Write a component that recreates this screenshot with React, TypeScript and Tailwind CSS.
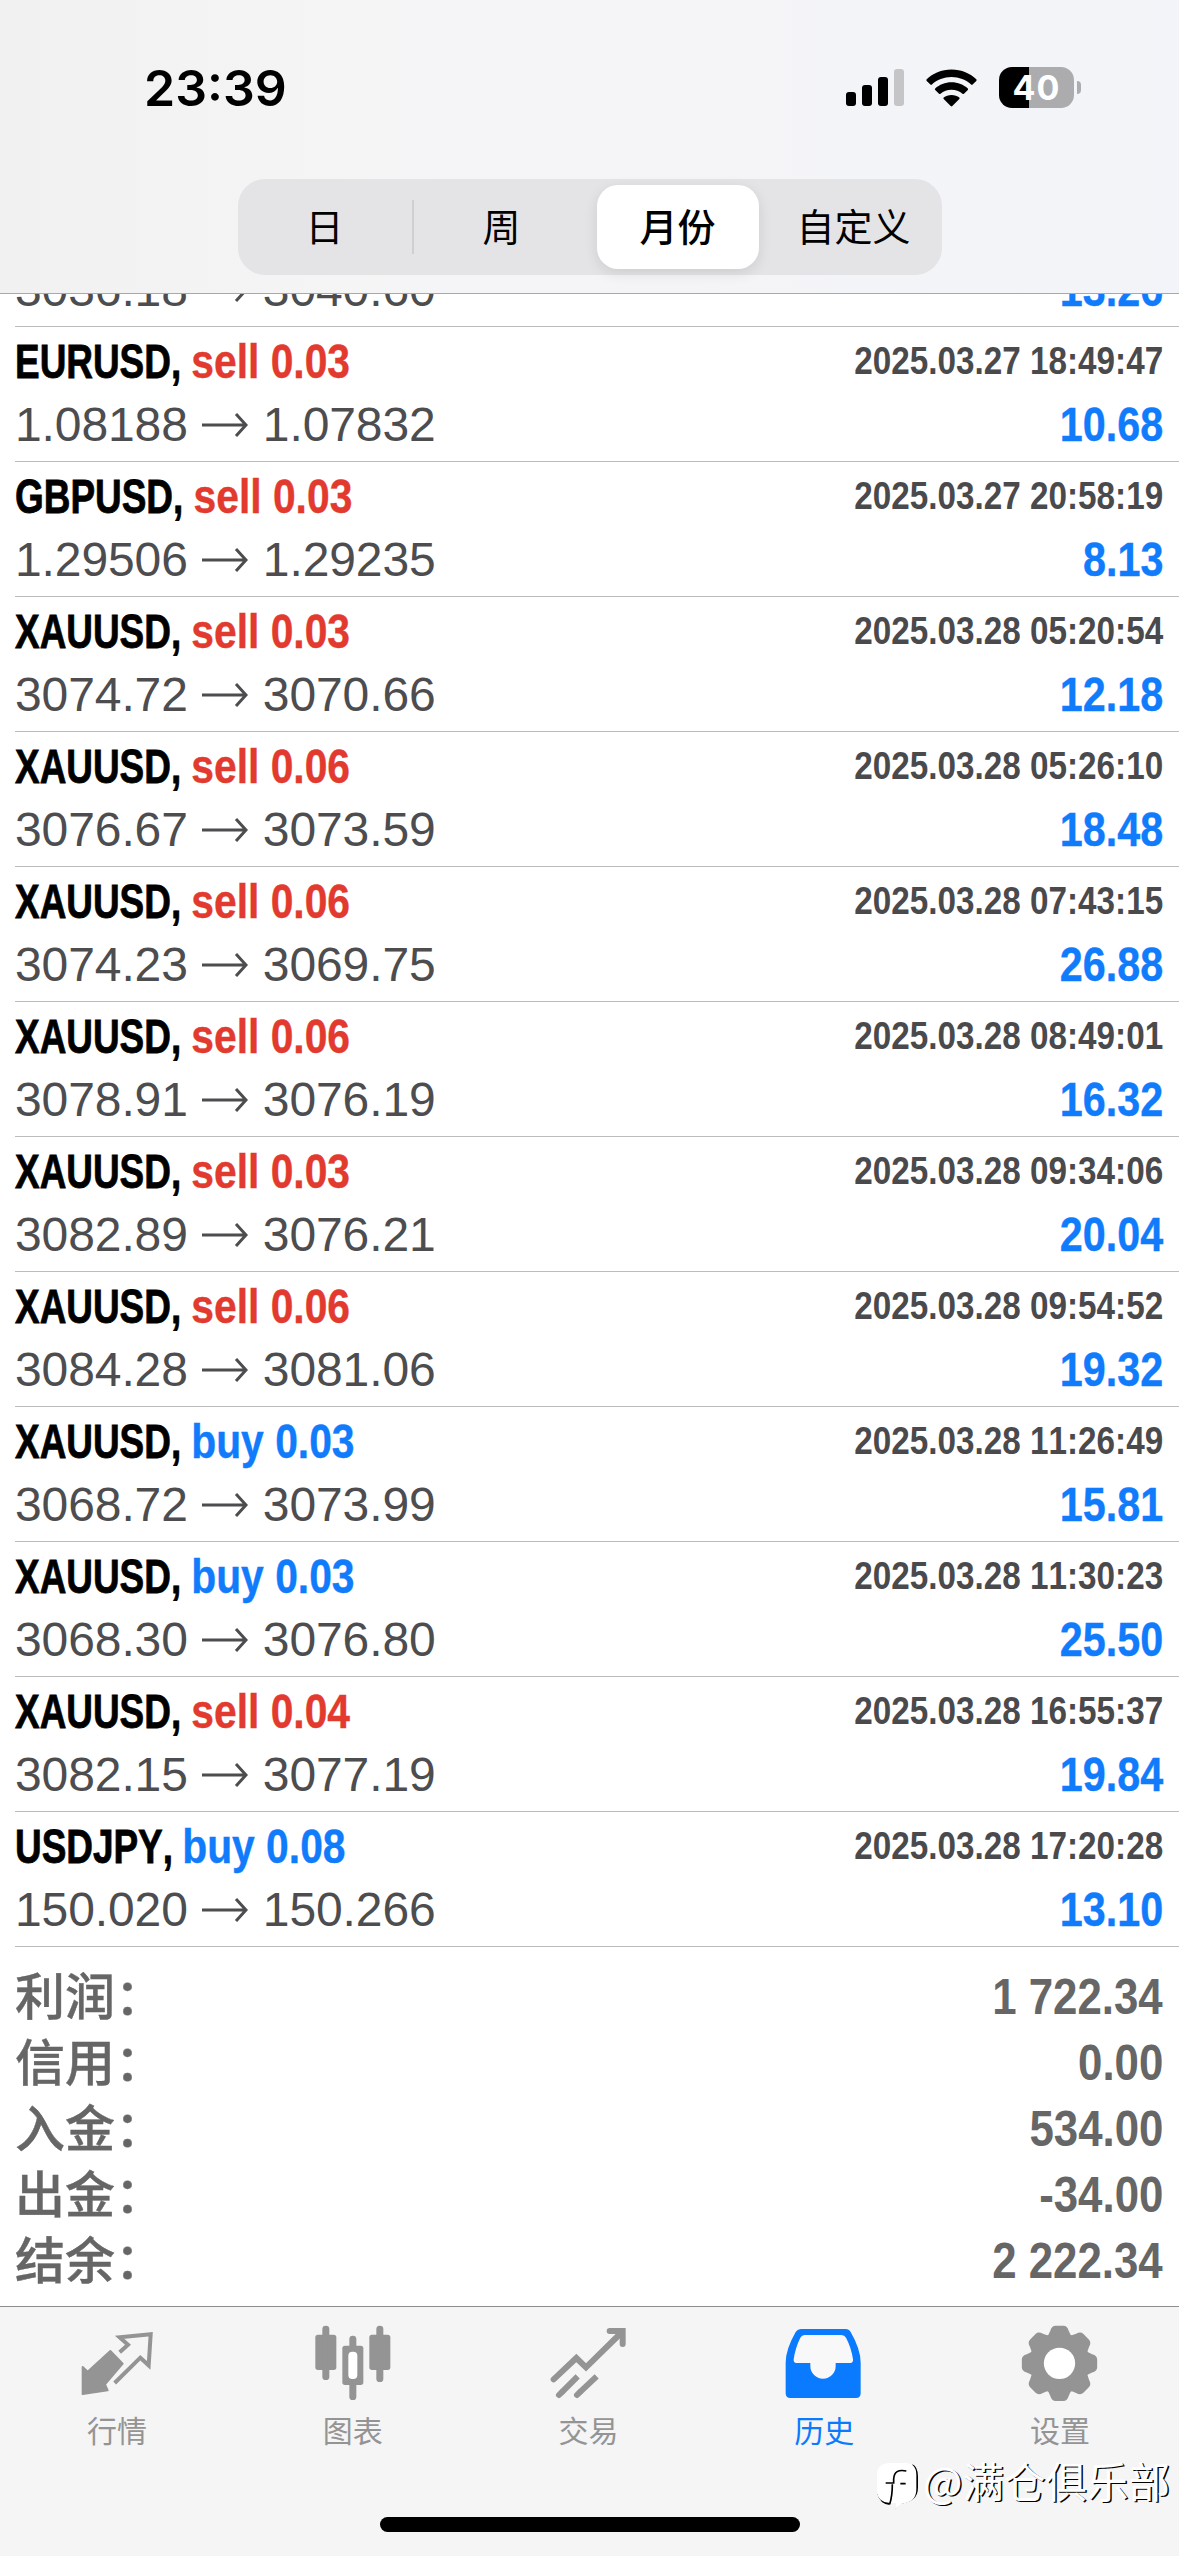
import type { ReactNode } from "react";
import clsx from "clsx";

type Deal = {
  symbol: string;
  side: "buy" | "sell";
  volume: string;
  open: string;
  close: string;
  time: string;
  profit: string;
};

const deals: Deal[] = [
  { symbol: "EURUSD", side: "sell", volume: "0.03", open: "1.08188", close: "1.07832", time: "2025.03.27 18:49:47", profit: "10.68" },
  { symbol: "GBPUSD", side: "sell", volume: "0.03", open: "1.29506", close: "1.29235", time: "2025.03.27 20:58:19", profit: "8.13" },
  { symbol: "XAUUSD", side: "sell", volume: "0.03", open: "3074.72", close: "3070.66", time: "2025.03.28 05:20:54", profit: "12.18" },
  { symbol: "XAUUSD", side: "sell", volume: "0.06", open: "3076.67", close: "3073.59", time: "2025.03.28 05:26:10", profit: "18.48" },
  { symbol: "XAUUSD", side: "sell", volume: "0.06", open: "3074.23", close: "3069.75", time: "2025.03.28 07:43:15", profit: "26.88" },
  { symbol: "XAUUSD", side: "sell", volume: "0.06", open: "3078.91", close: "3076.19", time: "2025.03.28 08:49:01", profit: "16.32" },
  { symbol: "XAUUSD", side: "sell", volume: "0.03", open: "3082.89", close: "3076.21", time: "2025.03.28 09:34:06", profit: "20.04" },
  { symbol: "XAUUSD", side: "sell", volume: "0.06", open: "3084.28", close: "3081.06", time: "2025.03.28 09:54:52", profit: "19.32" },
  { symbol: "XAUUSD", side: "buy", volume: "0.03", open: "3068.72", close: "3073.99", time: "2025.03.28 11:26:49", profit: "15.81" },
  { symbol: "XAUUSD", side: "buy", volume: "0.03", open: "3068.30", close: "3076.80", time: "2025.03.28 11:30:23", profit: "25.50" },
  { symbol: "XAUUSD", side: "sell", volume: "0.04", open: "3082.15", close: "3077.19", time: "2025.03.28 16:55:37", profit: "19.84" },
  { symbol: "USDJPY", side: "buy", volume: "0.08", open: "150.020", close: "150.266", time: "2025.03.28 17:20:28", profit: "13.10" },
];

const summary = [
  { label: "利润：", value: "1 722.34" },
  { label: "信用：", value: "0.00" },
  { label: "入金：", value: "534.00" },
  { label: "出金：", value: "-34.00" },
  { label: "结余：", value: "2 222.34" },
];

const periods = ["日", "周", "月份", "自定义"];

export default function App() {
  return (
    <div className="relative flex h-[2556px] w-[1179px] flex-col overflow-hidden bg-white font-['Liberation_Sans','Noto_Sans_CJK_SC',sans-serif] text-black">
      <header className="flex h-[294px] shrink-0 flex-col border-b border-[#a9a9ab] bg-linear-to-r from-[#f1f1f1] via-[#f5f5f6] via-30% to-[#f3f4f9]">
        <StatusBar />
        <PeriodSwitch active="月份" />
      </header>

      <main className="min-h-0 flex-1 overflow-hidden">
        {/* list is scrolled so that only the price line of the first deal peeks out */}
        <ul className="-mt-[36px]">
          <li className="ml-[15px] h-[69px] border-b border-[#bcbcbe] pr-4 text-[48px] leading-[63px]">
            <PriceLine open="3036.18" close="3040.60" profit="13.26" />
          </li>
          {deals.map((deal) => (
            <DealRow key={deal.time} deal={deal} />
          ))}
        </ul>
        <dl className="pt-[17px] pr-4 pl-[15px] text-[#666]">
          {summary.map((item) => (
            <div key={item.label} className="flex h-[66px] justify-between leading-[66px]">
              <dt className="font-['Noto_Sans_CJK_SC',sans-serif] text-[50px] leading-[59px] font-medium [-webkit-text-stroke:0.4px]">
                {item.label}
              </dt>
              <dd className="origin-right scale-x-[.885] text-[49.5px] font-bold">{item.value}</dd>
            </div>
          ))}
        </dl>
      </main>

      <TabBar />
      <Watermark />
    </div>
  );
}

function StatusBar() {
  return (
    <div className="flex h-[179px] items-start justify-between pt-[67px] pr-[98px] pl-[144px]">
      <span className="font-['Inter',sans-serif] text-[50px] leading-[42px] font-semibold">23:39</span>
      <div className="flex h-[41px] items-center">
        <svg className="h-[37px] w-[58px]" viewBox="0 0 58 37">
          <rect x="0" y="23" width="10" height="14" rx="3" />
          <rect x="16" y="16" width="10" height="21" rx="3" />
          <rect x="32" y="8" width="10" height="29" rx="3" />
          <rect x="48" y="0" width="10" height="37" rx="3" fill="#c5c5c7" />
        </svg>
        <svg className="ml-[22px] h-[38px] w-[51px]" viewBox="0 0 51 38">
          <path d="M25.500 0.500C35.500 0.500 44.500 4.500 50.300 10.300Q51 11 50.300 11.900L46.600 15.600Q45.900 16.200 45.100 15.500C40 10.800 33 8 25.500 8S11 10.800 5.900 15.500Q5.100 16.200 4.400 15.600L0.700 11.900Q0 11 0.700 10.300C6.500 4.500 15.500 0.500 25.500 0.500Z" />
          <path d="M25.500 13.300C31.900 13.300 37.600 15.700 41.800 19.500Q42.500 20.300 41.800 21L38 24.700Q37.200 25.300 36.500 24.700C33.500 22.200 29.700 20.700 25.500 20.700S17.500 22.200 14.500 24.700Q13.800 25.300 13 24.700L9.200 21Q8.500 20.300 9.200 19.500C13.400 15.700 19.100 13.300 25.500 13.300Z" />
          <path d="M25.500 26C28.600 26 31.300 27 33.300 28.600Q34 29.300 33.300 30.100L26.300 37.100Q25.500 37.800 24.700 37.100L17.700 30.100Q17 29.300 17.700 28.600C19.700 27 22.400 26 25.500 26Z" />
        </svg>
        <div className="ml-[22px] flex h-[41px] w-[75px] items-center justify-center rounded-[13px] bg-linear-to-r from-black from-40% to-[#acacae] to-40%">
          <span className="font-['Inter',sans-serif] text-[34px] leading-none font-bold tracking-[1px] text-white">40</span>
        </div>
        <div className="ml-[3px] h-[13px] w-[4px] rounded-r-full bg-[#acacae]" />
      </div>
    </div>
  );
}

function PeriodSwitch({ active }: { active: string }) {
  return (
    <div className="mx-auto grid h-24 w-[704px] grid-cols-4 items-center rounded-[27px] bg-[#e4e4e6] text-[38px]">
      {periods.map((period, i) => (
        <div
          key={period}
          className={clsx(
            "flex items-center justify-center",
            period === active
              ? "mx-[7px] h-[84px] rounded-[21px] bg-white font-medium shadow-[0_4px_14px_rgba(0,0,0,0.1)]"
              : "h-[54px]",
            i === 0 && "border-r-2 border-[#cfcfd2]"
          )}
        >
          <span className="pb-[6px] font-['Noto_Sans_CJK_SC',sans-serif]">{period}</span>
        </div>
      ))}
    </div>
  );
}

function DealRow({ deal }: { deal: Deal }) {
  return (
    <li className="ml-[15px] h-[135px] border-b border-[#bcbcbe] pt-[3px] pr-4 text-[48px] leading-[63px]">
      <div className="flex h-[63px] justify-between">
        <p className="origin-left scale-x-[.85] font-bold whitespace-nowrap">
          <span className="-mr-[22px] inline-block origin-left scale-x-[.905] whitespace-pre [font-kerning:none] [-webkit-text-stroke:0.8px]">
            {`${deal.symbol}, `}
          </span>
          <span
            className={clsx(
              "[-webkit-text-stroke:0.4px]",
              deal.side === "sell" ? "text-[#e23a2e]" : "text-[#107bfb]"
            )}
          >
            {deal.side} {deal.volume}
          </span>
        </p>
        <p className="origin-right scale-x-[.853] text-[39px] leading-[61px] font-bold whitespace-nowrap text-[#4a4a4d] [font-kerning:none]">
          {deal.time}
        </p>
      </div>
      <PriceLine open={deal.open} close={deal.close} profit={deal.profit} />
    </li>
  );
}

function PriceLine({ open, close, profit }: { open: string; close: string; profit: string }) {
  return (
    <div className="flex justify-between">
      <p className="flex items-center tracking-[-0.1px] text-[#4d4d50]">
        {open}
        <svg className="mr-[15px] ml-[14px] h-6 w-[46px]" viewBox="0 0 46 24" fill="none" stroke="currentColor" strokeWidth="3">
          <path d="M0 12H44M34 1L44 12L34 23" />
        </svg>
        {close}
      </p>
      <p className="origin-right scale-x-[.86] font-bold text-[#107bfb] [-webkit-text-stroke:0.4px]">{profit}</p>
    </div>
  );
}

function TabBar() {
  return (
    <footer className="flex h-[250px] shrink-0 flex-col items-center border-t border-[#8e8e90] bg-[#f5f5f5]">
      <nav className="grid w-full grid-cols-5 pt-4 text-[#949494]">
        <Tab label="行情">
          <svg className="size-20" viewBox="24 24 240 240" fill="currentColor" stroke="currentColor" strokeLinejoin="round">
            <path strokeWidth="6" d="M121 108L158 146L105 208L113 226L38 237V156L53 170Z" />
            <path strokeWidth="12" fill="none" strokeLinejoin="miter" d="M149 112L174 89L149 67L242 58L236 151L211 128L134 204" />
          </svg>
        </Tab>
        <Tab label="图表">
          <svg className="size-20" viewBox="731 24 240 240" fill="currentColor">
            <rect x="735" y="59" width="63" height="106" rx="8" />
            <rect x="756" y="32" width="21" height="163" rx="10" />
            <rect x="897" y="59" width="63" height="106" rx="8" />
            <rect x="918" y="32" width="21" height="169" rx="10" />
            <rect x="837" y="62" width="21" height="193" rx="10" />
            <rect x="816" y="92" width="63" height="118" rx="8" />
            <rect x="834" y="110" width="27" height="82" rx="12" fill="#fff" />
          </svg>
        </Tab>
        <Tab label="交易">
          <svg className="size-20" viewBox="28 24 240 240" fill="none" stroke="currentColor" strokeWidth="18">
            <path strokeLinecap="round" d="M42 193L110 129L139 157L244 54" />
            <path strokeLinecap="round" strokeLinejoin="miter" d="M210 48H249V87" />
            <path d="M114 184L66 232M171 184L120 232" />
            <path strokeLinecap="round" d="M66 232L58 240M120 232L112 240" />
          </svg>
        </Tab>
        <Tab label="历史" active>
          <svg className="size-20" viewBox="736 24 240 240">
            <path
              fill="currentColor"
              d="M784 42H918Q928 42 933 51Q963 103 963 143V235Q963 249 949 249H752Q738 249 738 235V143Q738 103 768 51Q774 42 784 42Z"
            />
            <path
              fill="#f8f8f8"
              d="M795 60H905Q915 60 919 68Q935 98 940 133Q941 144 932 144H888V153A37.500 37.500 0 0 1 812 153V144H770Q761 144 762 133Q767 98 782 68Q786 60 795 60Z"
            />
          </svg>
        </Tab>
        <Tab label="设置">
          <svg className="size-20" viewBox="33 39 240 240" fill="currentColor">
            <circle cx="148.500" cy="160" r="89" />
            {[0, 45, 90, 135, 180, 225, 270, 315].map((angle) => (
              <path
                key={angle}
                transform={`rotate(${angle} 148.500 160)`}
                d="M106 84Q116 77 121 62Q125 47 137 47H160Q172 47 176 62Q181 77 191 84Z"
              />
            ))}
            <circle cx="148.500" cy="160" r="47" fill="#fff" />
          </svg>
        </Tab>
      </nav>
      <div className="mt-[68px] h-[15px] w-[420px] rounded-full bg-black" />
    </footer>
  );
}

function Tab({ label, active, children }: { label: string; active?: boolean; children: ReactNode }) {
  return (
    <div className={clsx("flex flex-col items-center", active && "text-[#0a7aff]")}>
      {children}
      <span className="mt-[6px] mr-[2px] font-['Noto_Sans_CJK_SC',sans-serif] text-[30px] leading-10">{label}</span>
    </div>
  );
}

function Watermark() {
  return (
    <div className="absolute right-[9px] bottom-[45px] flex items-start text-white">
      <svg className="mt-[8px] mr-[4px] h-[48px] w-[42px]" viewBox="0 0 126 144">
        <path fill="#000" d="M56 142L60 122Q124 122 123 72V40Q122 10 106 4L112 60L60 116ZM1 92Q8 122 38 126V112Z" />
        <path fill="#fff" d="M40 0H84Q118 0 118 36V78Q118 116 80 121Q66 124 57 136V120H40Q0 118 0 82V36Q0 0 40 0Z" />
        <path fill="none" stroke="#000" strokeWidth="5" d="M88 24Q52 16 50 48V60H26M70 62H86M46 64Q46 100 38 124" />
      </svg>
      <span className="font-['Noto_Sans_CJK_SC',sans-serif] text-[41.5px] leading-[50px] whitespace-nowrap [text-shadow:1.5px_1px_0_#000]">
        @满仓俱乐部
      </span>
    </div>
  );
}
